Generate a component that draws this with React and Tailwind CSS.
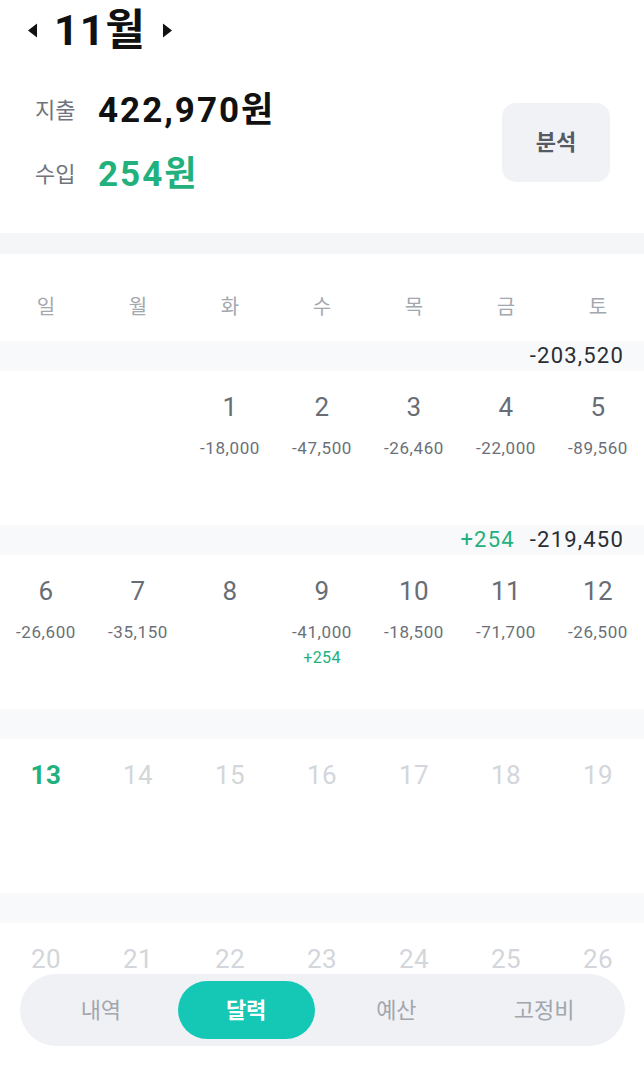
import React from "react";

const weeks = [
  {
    income: null,
    total: "-203,520",
    days: [
      null,
      null,
      { d: 1, out: "-18,000" },
      { d: 2, out: "-47,500" },
      { d: 3, out: "-26,460" },
      { d: 4, out: "-22,000" },
      { d: 5, out: "-89,560" },
    ],
  },
  {
    income: "+254",
    total: "-219,450",
    days: [
      { d: 6, out: "-26,600" },
      { d: 7, out: "-35,150" },
      { d: 8 },
      { d: 9, out: "-41,000", inc: "+254" },
      { d: 10, out: "-18,500" },
      { d: 11, out: "-71,700" },
      { d: 12, out: "-26,500" },
    ],
  },
  {
    days: [13, 14, 15, 16, 17, 18, 19].map((d) => ({ d, future: d !== 13, today: d === 13 })),
  },
  {
    days: [20, 21, 22, 23, 24, 25, 26].map((d) => ({ d, future: true })),
  },
];

const weekdays = ["일", "월", "화", "수", "목", "금", "토"];
const tabs = ["내역", "달력", "예산", "고정비"];

function Caret({ dir }) {
  return (
    <svg width="11" height="15" viewBox="0 0 11 15" aria-hidden="true">
      {dir === "left" ? (
        <path d="M10 0.5 L10 14.5 L1 7.5 Z" fill="#111" />
      ) : (
        <path d="M1 0.5 L1 14.5 L10 7.5 Z" fill="#111" />
      )}
    </svg>
  );
}

function DayCell({ day }) {
  if (!day) return <div />;
  let numCls = "text-[#686d75]";
  if (day.future) numCls = "text-[#d3d6db]";
  if (day.today) numCls = "text-[#22b07d] font-bold";
  return (
    <div className="flex flex-col items-center">
      <div className={`h-[36px] flex items-center text-[26px] leading-none tracking-[0.5px] ${numCls}`}>{day.d}</div>
      {day.out && (
        <div className="mt-[13px] text-[17px] leading-[20px] tracking-[0.6px] text-[#6b7078]">{day.out}</div>
      )}
      {day.inc && <div className="mt-[6px] text-[16px] leading-[20px] tracking-[0.4px] text-[#22b07d]">{day.inc}</div>}
    </div>
  );
}

export default function App() {
  return (
    <div
      className="relative w-[644px] h-[1067px] overflow-hidden bg-white"
      style={{ fontFamily: 'Roboto, "Noto Sans CJK KR", "Noto Sans", sans-serif' }}
    >
      <header className="h-[233px] px-[27px]">
        <div className="flex items-center gap-[16px] h-[60px]">
          <Caret dir="left" />
          <h1 className="text-[43px] font-bold leading-none text-[#111] tracking-[1px]">11월</h1>
          <Caret dir="right" />
        </div>
        <div className="flex items-start justify-between">
          <div className="pl-[8px] pt-[18px]">
            <div className="flex items-center h-[64px]">
              <span className="w-[63px] text-[22px] text-[#70747c]">지출</span>
              <span className="text-[35px] font-bold text-[#111] leading-none tracking-[2px]">422,970원</span>
            </div>
            <div className="flex items-center h-[64px]">
              <span className="w-[63px] text-[22px] text-[#70747c]">수입</span>
              <span className="text-[35px] font-bold text-[#22b07d] leading-none tracking-[2px]">254원</span>
            </div>
          </div>
          <button className="mt-[43px] mr-[7px] w-[108px] h-[79px] rounded-[14px] bg-[#f1f2f5] text-[22px] font-bold text-[#555a63]">
            분석
          </button>
        </div>
      </header>

      <div className="h-[21px] bg-[#f5f6f8]" />

      <div className="grid grid-cols-7 h-[87px] items-center">
        {weekdays.map((w) => (
          <div key={w} className="text-center text-[20px] text-[#a3a7ae] pt-[18px]">
            {w}
          </div>
        ))}
      </div>

      {weeks.map((week, i) => (
        <section key={i}>
          <div className="h-[30px] bg-[#f8f9fa] flex items-center justify-end gap-[15px] pr-[20px] text-[22px] leading-none tracking-[1.2px]">
            {week.income && <span className="text-[#22b07d]">{week.income}</span>}
            {week.total && <span className="text-[#2b2e33]">{week.total}</span>}
          </div>
          <div className="grid grid-cols-7 h-[154px] pt-[18px] items-start">
            {week.days.map((day, j) => (
              <DayCell key={j} day={day} />
            ))}
          </div>
        </section>
      ))}

      <nav className="fixed left-[20px] right-[19px] bottom-[21px] h-[72px] rounded-full bg-[#f0f1f5] p-[7px] grid grid-cols-4">
        {tabs.map((t) => (
          <button
            key={t}
            className={
              t === "달력"
                ? "ml-[3px] mr-[8px] rounded-full bg-[#14c8b5] text-white font-bold text-[22px]"
                : "rounded-full text-[#a2a6ad] text-[22px]"
            }
          >
            {t}
          </button>
        ))}
      </nav>
    </div>
  );
}
